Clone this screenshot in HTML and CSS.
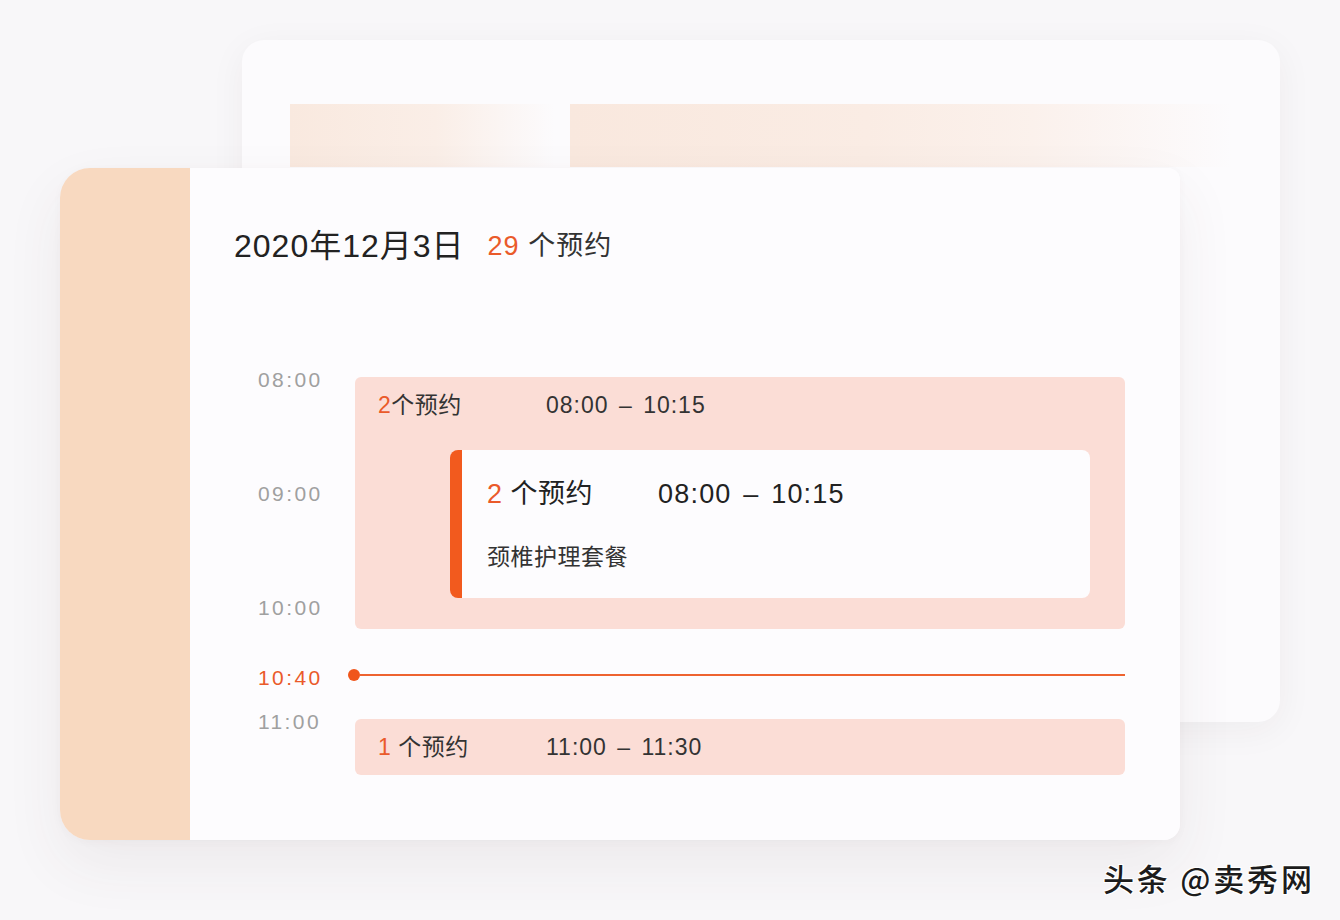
FILE: index.html
```html
<!DOCTYPE html>
<html lang="zh-CN">
<head>
<meta charset="utf-8">
<title>预约日程</title>
<link rel="stylesheet" href="styles.css">
</head>
<body>
<div class="stage">
  <div class="back-card">
    <div class="ghost ghost-a"></div>
    <div class="ghost ghost-b"></div>
  </div>

  <div class="front-card">
    <div class="strip"></div>
    <div class="content">
      <div class="title">
        <span class="date">2020年12月3日</span>
        <span class="total"><span class="num">29</span> 个预约</span>
      </div>

      <div class="timeline">
        <div class="labels">
          <div class="label">08:00</div>
          <div class="label l-gap">09:00</div>
          <div class="label l-gap">10:00</div>
          <div class="label now l-now">10:40</div>
          <div class="label l-after">11:00</div>
        </div>
        <div class="tracks">
          <div class="block block-big">
            <div class="row">
              <span class="count"><span class="num">2</span>个预约</span>
              <span class="range">08:00 – 10:15</span>
            </div>
            <div class="detail">
              <div class="detail-row">
                <span class="d-count"><span class="num">2</span> 个预约</span>
                <span class="d-range">08:00 – 10:15</span>
              </div>
              <div class="detail-name">颈椎护理套餐</div>
            </div>
          </div>

          <div class="now-line">
            <span class="dot"></span>
            <span class="bar"></span>
          </div>

          <div class="block block-small">
            <div class="row">
              <span class="count"><span class="num">1</span> 个预约</span>
              <span class="range">11:00 – 11:30</span>
            </div>
          </div>
        </div>
      </div>
    </div>
  </div>

  <div class="watermark">头条 @卖秀网</div>
</div>
</body>
</html>
```

FILE: styles.css
```css
* { box-sizing: border-box; }

html, body {
  margin: 0;
  padding: 0;
}

body {
  background: #f8f7f9;
  font-family: "Liberation Sans", "Noto Sans CJK SC", sans-serif;
  color: #222;
}

.stage {
  position: relative;
  width: 1340px;
  height: 920px;
  overflow: hidden;
  background: #f8f7f9;
}

/* back card */
.back-card {
  position: absolute;
  left: 242px;
  top: 40px;
  width: 1038px;
  height: 682px;
  border-radius: 22px;
  background: #fcfbfd;
  box-shadow: 0 8px 36px rgba(60, 40, 40, 0.05);
  display: flex;
  align-items: flex-start;
  gap: 15px;
  padding: 64px 48px 0 48px;
}

.ghost {
  height: 63px;
}

.ghost-a {
  width: 265px;
  background: linear-gradient(90deg, #f9e9df 0%, #faeee7 55%, rgba(252, 251, 253, 0) 100%);
}

.ghost-b {
  flex: 1;
  background: linear-gradient(90deg, #f9e8de 0%, #faece4 45%, #fbf1ec 70%, rgba(252, 251, 253, 0) 100%);
}

/* front card */
.front-card {
  position: absolute;
  left: 60px;
  top: 168px;
  width: 1120px;
  height: 672px;
  display: flex;
  border-radius: 30px 12px 16px 30px;
  overflow: hidden;
  box-shadow: 0 24px 60px rgba(90, 60, 60, 0.07), 0 2px 8px rgba(90, 60, 60, 0.03);
}

.strip {
  width: 130px;
  background: #f8d9c0;
}

.content {
  flex: 1;
  background: #fdfcfe;
  padding: 60px 55px 0 44px;
}

.title {
  display: flex;
  align-items: center;
  height: 36px;
  line-height: 36px;
}

.date {
  font-size: 32px;
  letter-spacing: 1px;
  color: #222;
}

.total {
  margin-left: 23px;
  font-size: 27px;
  letter-spacing: 1px;
  color: #333;
}

.num {
  color: #ea5a2a;
}

/* timeline */
.timeline {
  display: flex;
  margin-top: 104px;
  padding-left: 24px;
}

.labels {
  width: 97px;
  display: flex;
  flex-direction: column;
}

.label {
  font-size: 21px;
  line-height: 24px;
  height: 24px;
  letter-spacing: 2.4px;
  color: #a0a0a0;
}

.l-gap { margin-top: 90px; }
.l-now { margin-top: 46px; }
.l-after { margin-top: 20px; }

.label.now {
  color: #ea5a2a;
}

.tracks {
  width: 770px;
  padding-top: 9px;
  display: flex;
  flex-direction: column;
}

.block {
  background: #fbddd6;
  border-radius: 6px;
}

.block-big {
  padding: 14px 35px 31px 23px;
}

.block-small {
  margin-top: 38px;
  padding: 14px 23px;
}

.row {
  display: flex;
  height: 28px;
  line-height: 28px;
  font-size: 23px;
  color: #333;
}

.count {
  width: 168px;
  letter-spacing: 0.5px;
}

.range {
  letter-spacing: 1px;
  word-spacing: 3px;
}

.detail {
  margin-top: 31px;
  margin-left: 72px;
  background: #fdfcfe;
  border-left: 12px solid #f25a1e;
  border-radius: 8px;
  padding: 27px 25px;
}

.detail-row {
  display: flex;
  height: 34px;
  line-height: 34px;
  font-size: 27px;
  color: #222;
}

.d-count {
  width: 171px;
  letter-spacing: 0.5px;
}

.d-range {
  letter-spacing: 1.2px;
  word-spacing: 3px;
}

.detail-name {
  margin-top: 32px;
  height: 28px;
  line-height: 28px;
  font-size: 23px;
  letter-spacing: 0.5px;
  color: #333;
}

.now-line {
  margin-top: 40px;
  height: 12px;
  display: flex;
  align-items: center;
}

.dot {
  width: 12px;
  height: 12px;
  border-radius: 50%;
  background: #f0561b;
  margin-left: -7px;
  flex: none;
}

.bar {
  flex: 1;
  height: 2px;
  background: #ee6330;
}

/* watermark */
.watermark {
  position: absolute;
  left: 1103px;
  top: 857px;
  font-family: "Noto Sans CJK SC", sans-serif;
  font-size: 31px;
  line-height: 42px;
  letter-spacing: 2.8px;
  font-weight: 500;
  color: #1c1c1c;
  text-shadow: 1px 1px 0 #fff, -1px -1px 0 #fff, 1px -1px 0 #fff, -1px 1px 0 #fff;
}
```
